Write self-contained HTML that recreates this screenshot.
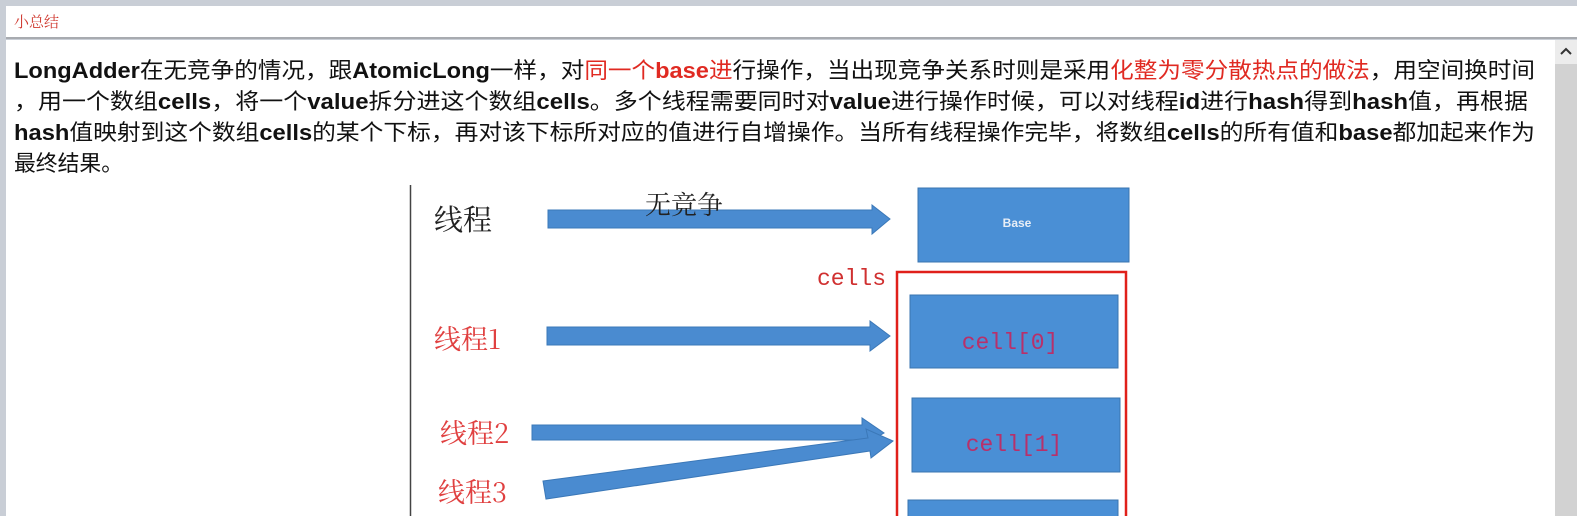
<!DOCTYPE html>
<html><head><meta charset="utf-8"><style>
html,body{margin:0;padding:0;}
body{width:1577px;height:516px;overflow:hidden;background:#c9ced6;position:relative;font-family:"Liberation Sans","Noto Sans CJK SC",sans-serif;}
#top{position:absolute;left:6px;top:6px;width:1571px;height:31px;background:#fff;border-bottom:2px solid #a8abb0;}
#top span{position:absolute;left:8px;top:5px;font-size:15px;color:#d03a30;font-family:"Noto Serif CJK SC",serif;}
#main{position:absolute;left:6px;top:40px;width:1549px;height:476px;background:#fff;}
#sb{position:absolute;left:1555px;top:40px;width:22px;height:476px;background:#d2d2d2;}
#sb .up{position:absolute;left:0;top:0;width:22px;height:24px;background:#ececec;}
.a{position:absolute;font-family:"Noto Serif CJK SC",serif;}
tspan.b{font-weight:bold;}
</style></head><body>
<div id="top"><span>小总结</span></div>
<div id="main"></div>
<div id="sb"><div class="up"><svg width="22" height="24"><path d="M6 14 L11 9 L16 14" stroke="#333" stroke-width="2" fill="none"/></svg></div></div>
<svg style="position:absolute;left:0;top:0" width="1577" height="516" font-family="Liberation Sans, Noto Sans CJK SC, sans-serif" font-size="22">
<g fill="#111">
<text x="14" y="78" textLength="1521" lengthAdjust="spacingAndGlyphs"><tspan class="b">LongAdder</tspan>在无竞争的情况，跟<tspan class="b">AtomicLong</tspan>一样，对<tspan fill="#e02a22">同一个<tspan class="b">base</tspan>进</tspan>行操作，当出现竞争关系时则是采用<tspan fill="#e02a22">化整为零分散热点的做法</tspan>，用空间换时间</text>
<text x="14" y="109" textLength="1514" lengthAdjust="spacingAndGlyphs">，用一个数组<tspan class="b">cells</tspan>，将一个<tspan class="b">value</tspan>拆分进这个数组<tspan class="b">cells</tspan>。多个线程需要同时对<tspan class="b">value</tspan>进行操作时候，可以对线程<tspan class="b">id</tspan>进行<tspan class="b">hash</tspan>得到<tspan class="b">hash</tspan>值，再根据</text>
<text x="14" y="140" textLength="1521" lengthAdjust="spacingAndGlyphs"><tspan class="b">hash</tspan>值映射到这个数组<tspan class="b">cells</tspan>的某个下标，再对该下标所对应的值进行自增操作。当所有线程操作完毕，将数组<tspan class="b">cells</tspan>的所有值和<tspan class="b">base</tspan>都加起来作为</text>
<text x="14" y="171" textLength="109" lengthAdjust="spacingAndGlyphs">最终结果。</text>
</g>
<line x1="410.5" y1="185" x2="410.5" y2="516" stroke="#444" stroke-width="1.5"/>
<g fill="#4a8bd0" stroke="#3b78b8" stroke-width="1">
<polygon points="548,210 872,210 872,205 890,219 872,234 872,228 548,228"/>
<polygon points="547,327 870,327 870,321 890,336 870,351 870,345 547,345"/>
<polygon points="532,425 862,425 862,418 884,433 862,446 862,440 532,440"/>
<polygon points="543,481 868,438 866,429 893,441 871,458 870,451 546,499"/>
</g>
<g fill="#4a8fd5" stroke="#3a74b0" stroke-width="1">
<rect x="918" y="188" width="211" height="74"/>
<rect x="910" y="295" width="208" height="73"/>
<rect x="912" y="398" width="208" height="74"/>
<rect x="908" y="500" width="210" height="20"/>
</g>
<rect x="897" y="272" width="229" height="250" fill="none" stroke="#e0201a" stroke-width="2.5"/>
<text x="1017" y="227" fill="#e8eef6" font-size="12" font-weight="bold" font-family="Liberation Sans" text-anchor="middle">Base</text>
<text x="1010" y="349" fill="#b8306a" font-size="23" font-family="Liberation Mono" text-anchor="middle">cell[0]</text>
<text x="1014" y="451" fill="#b8306a" font-size="23" font-family="Liberation Mono" text-anchor="middle">cell[1]</text>
<text x="817" y="285" fill="#d03030" font-size="23" font-family="Liberation Mono">cells</text>
</svg>
<div class="a" style="left:434px;top:198px;font-size:29px;color:#222;">线程</div>
<div class="a" style="left:645px;top:185px;font-size:26px;color:#222;">无竞争</div>
<div class="a" style="left:434px;top:318px;font-size:27px;color:#e04040;">线程1</div>
<div class="a" style="left:440px;top:412px;font-size:27px;color:#e04040;">线程2</div>
<div class="a" style="left:438px;top:471px;font-size:27px;color:#e04040;">线程3</div>
</body></html>
